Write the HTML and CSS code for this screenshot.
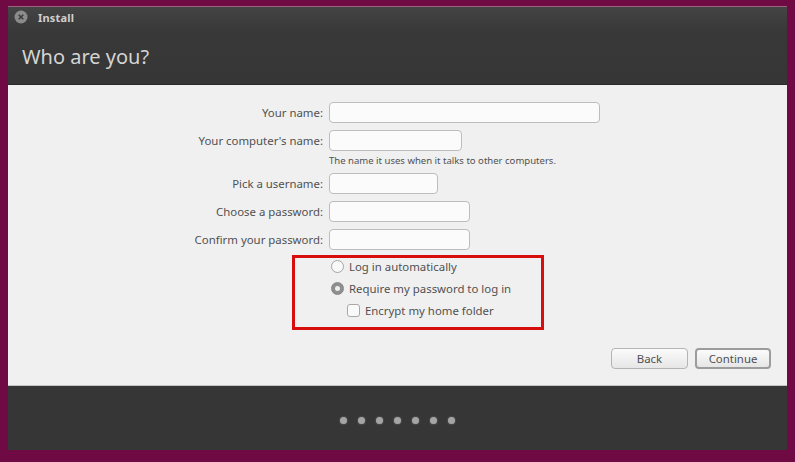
FILE: index.html
```html
<!DOCTYPE html>
<html lang="en">

<head>
    <meta charset="UTF-8">
    <meta name="viewport" content="width=device-width, initial-scale=1.0">
    <title>Install</title>
    <link rel="stylesheet" href="styles.css">
</head>

<body>

    <div class="window">

        <div class="header">
            <div class="titlebar">
                <svg class="close" width="14" height="14" viewBox="0 0 14 14">
                    <circle cx="7" cy="7" r="6.5" fill="#8b8b8b" />
                    <path d="M4.7 4.7 L9.3 9.3 M9.3 4.7 L4.7 9.3" stroke="#3a3a3a" stroke-width="1.5" />
                </svg>
                <span class="title">Install</span>
            </div>
            <h1>Who are you?</h1>
        </div>

        <div class="content">

            <div class="form">
                <label>Your name:</label>
                <input class="field w-name" type="text">

                <label>Your computer's name:</label>
                <input class="field w-computer" type="text">
                <div class="hint">The name it uses when it talks to other computers.</div>

                <label>Pick a username:</label>
                <input class="field w-user" type="text">

                <label>Choose a password:</label>
                <input class="field w-pass" type="password">

                <label>Confirm your password:</label>
                <input class="field w-pass" type="password">
            </div>

            <div class="login-options">
                <div class="option">
                    <span class="radio"></span>
                    <span>Log in automatically</span>
                </div>
                <div class="option">
                    <span class="radio checked"></span>
                    <span>Require my password to log in</span>
                </div>
                <div class="option sub-option">
                    <span class="checkbox"></span>
                    <span>Encrypt my home folder</span>
                </div>
            </div>

            <div class="buttons">
                <button type="button" class="btn">Back</button>
                <button type="button" class="btn btn-default">Continue</button>
            </div>

        </div>

        <div class="footer">
            <span class="dot"></span>
            <span class="dot"></span>
            <span class="dot"></span>
            <span class="dot"></span>
            <span class="dot"></span>
            <span class="dot"></span>
            <span class="dot"></span>
        </div>

    </div>

</body>

</html>
```

FILE: styles.css
```css
body {
    margin: 0;
    height: 462px;
    overflow: hidden;
    background: #6f0a45;
    font-family: "Noto Sans", sans-serif;
    color: #505050;
}

.window {
    width: 779px;
    margin: 6px 0 0 8px;
    border-top: 1px solid #a0607f;
}

.header {
    height: 77px;
    background: linear-gradient(#444444, #383838 24px, #363636);
    border-bottom: 1px solid #2a2a2a;
}

.titlebar {
    display: flex;
    align-items: center;
    padding: 2px 0 0 6px;
    height: 16px;
}

.close {
    margin-right: 10px;
}

.title {
    color: #cfcfcf;
    font-size: 11px;
    font-weight: bold;
    letter-spacing: 0.2px;
}

h1 {
    margin: 18px 0 0 14px;
    color: #d4d4d4;
    font-size: 20px;
    font-weight: normal;
    line-height: 28px;
}

.content {
    height: 301px;
    background: #f0f0f0;
    box-sizing: border-box;
    border-bottom: 1px solid #c4c4c4;
}

.form {
    display: grid;
    grid-template-columns: 315px auto;
    column-gap: 6px;
    row-gap: 7px;
    justify-items: start;
    align-items: center;
    padding-top: 17px;
}

label {
    justify-self: end;
    font-size: 11.4px;
}

.field {
    height: 21px;
    box-sizing: border-box;
    padding: 0;
    background: #fbfbfb;
    border: 1px solid #bdbdbd;
    border-radius: 4px;
    outline: none;
}

.w-name {
    width: 271px;
}

.w-computer {
    width: 133px;
}

.w-user {
    width: 109px;
}

.w-pass {
    width: 141px;
}

.hint {
    grid-column: 2;
    font-size: 9.55px;
    line-height: 14px;
    margin: -4px 0 -2px;
}

.login-options {
    width: 252px;
    height: 75px;
    box-sizing: border-box;
    margin: 5px 0 0 284px;
    padding-left: 36px;
    border: 3px solid #d80d0d;
}

.option {
    display: flex;
    align-items: center;
    gap: 5px;
    height: 22px;
    font-size: 11.4px;
}

.option:first-child {
    margin-top: -3px;
}

.sub-option {
    padding-left: 16px;
}

.radio {
    width: 13px;
    height: 13px;
    box-sizing: border-box;
    border: 1px solid #a4a4a4;
    border-radius: 50%;
    background: #f9f9f9;
}

.radio.checked {
    background: radial-gradient(circle, #eeeeee 0 2px, #8f8f8f 3px);
    border-color: #858585;
}

.checkbox {
    width: 13px;
    height: 13px;
    box-sizing: border-box;
    border: 1px solid #a8a8a8;
    border-radius: 3px;
    background: #f9f9f9;
}

.buttons {
    display: flex;
    justify-content: flex-end;
    gap: 7px;
    padding: 18px 16px 0 0;
}

.btn {
    width: 77px;
    height: 21px;
    padding: 0;
    font-family: "Noto Sans", sans-serif;
    font-size: 11.4px;
    color: #505050;
    background: linear-gradient(#fbfbfb, #e6e6e6);
    border: 1px solid #b4b4b4;
    border-radius: 4px;
}

.btn-default {
    width: 76px;
    border: 2px solid #9c9c9c;
}

.footer {
    height: 64px;
    box-sizing: border-box;
    padding-top: 4px;
    background: #363636;
    display: flex;
    justify-content: center;
    align-items: center;
    gap: 11px;
}

.dot {
    width: 7px;
    height: 7px;
    border-radius: 50%;
    background: #a4a4a4;
    box-shadow: 0 0 2px #7a7a7a;
}
```
